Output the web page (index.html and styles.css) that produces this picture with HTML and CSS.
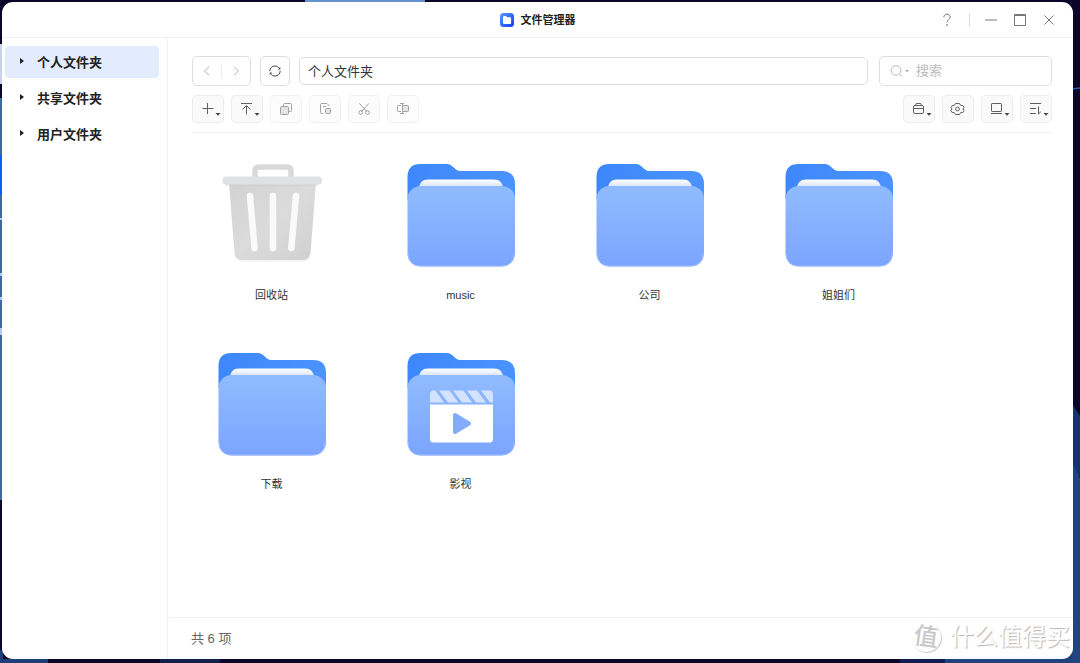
FILE: index.html
```html
<!DOCTYPE html>
<html lang="zh-CN">
<head>
<meta charset="utf-8">
<title>文件管理器</title>
<link rel="stylesheet" href="styles.css">
</head>
<body>
<svg class="wallpaper" viewBox="0 0 1080 663" preserveAspectRatio="none" aria-hidden="true">
  <rect width="1080" height="663" fill="#0b0529"/>
  <path d="M305 0h120v3H305z" fill="#6493cf"/>
  <path d="M0 44h3v40H0z" fill="#c5d3e6"/>
  <path d="M0 98h3v402H0z" fill="#3b69ae"/>
  <path d="M0 155h3v40H0z" fill="#0463f5"/>
  <path d="M0 218h3v2H0zM0 273h3v3H0zM0 297h3v3H0zM0 328h3v7H0z" fill="#b7cbe8"/>
  <path d="M0 650h3v13H0zM3 659h45v4H0z" fill="#1d3f78"/>
  <path d="M160 659h60v4h-60z" fill="#12204c"/>
  <path d="M900 659h45v4h-45z" fill="#101f50"/>
  <path d="M945 650h135v13H945z" fill="#1f427f"/>
  <path d="M1072 404l8 12v60h-8z" fill="#16336d"/>
  <path d="M1072 462l8 16v185h-8z" fill="#21447f"/>
  <path d="M1072 89l8-1" stroke="#2456b8" stroke-width="1.5"/>
</svg>

<svg class="symbols" aria-hidden="true">
  <defs>
    <linearGradient id="front" x1="0" y1="0" x2="0" y2="1"><stop offset="0" stop-color="#91bbff"/><stop offset="1" stop-color="#7ba4ff"/></linearGradient>
    <linearGradient id="back" x1="0" y1="0" x2="1" y2="0"><stop offset="0" stop-color="#3d87fb"/><stop offset="1" stop-color="#4a93ff"/></linearGradient>
    <linearGradient id="paper" x1="0" y1="0" x2="0" y2="1"><stop offset="0" stop-color="#fff"/><stop offset=".4" stop-color="#d5e0f5"/></linearGradient>
    <linearGradient id="bin" x1="0" y1="0" x2="1" y2="1"><stop offset="0" stop-color="#d2d2d2"/><stop offset=".5" stop-color="#dbdbdb"/><stop offset="1" stop-color="#d0d0d0"/></linearGradient>
    <linearGradient id="logo" x1="0" y1="0" x2="1" y2="1"><stop offset="0" stop-color="#5a9bff"/><stop offset="1" stop-color="#0a3cff"/></linearGradient>
  </defs>
  <symbol id="folder" viewBox="0 0 108 104">
    <path d="M.5 36V14Q.5 1 13.500 1H40q3 0 5 2l4 3.500q2 1.500 5 1.500h41q13 0 13 13v15z" fill="url(#back)"/>
    <path d="M12 26q0-9.500 9-9.500h66q9 0 9 9.500v10H12z" fill="url(#paper)"/>
    <rect x=".5" y="23" width="107.500" height="80.500" rx="13" fill="url(#front)"/>
    <path d="M1 90q0 13 13 13h80q13 0 13-13" fill="none" stroke="#a3c1ff" stroke-width=".8"/>
  </symbol>
</svg>

<div class="window">
  <header class="titlebar">
    <h1 class="app-title">
      <svg class="logo" viewBox="0 0 14 14"><rect width="14" height="14" rx="3.500" fill="url(#logo)"/><path d="M3 4.200q0-1.200 1.200-1.200h1.600l1.400 1.300h2.700q1.200 0 1.200 1.200v4.200q0 1.200-1.200 1.200H4.200q-1.200 0-1.200-1.200z" fill="#fff"/></svg>
      文件管理器
    </h1>
    <div class="window-controls">
      <button class="control" aria-label="帮助"><svg viewBox="0 0 14 14"><path d="M3.800 4.300C3.800 2.300 5.200 1.200 7 1.200s3.200 1.100 3.200 2.900c0 2.400-3.200 2.500-3.200 5.200"/><path d="M7 11.200v1.500" stroke-width="1.500"/></svg></button>
      <span class="control-rule"></span>
      <button class="control" aria-label="最小化"><svg viewBox="0 0 14 14"><path d="M1 7h12"/></svg></button>
      <button class="control" aria-label="最大化"><svg viewBox="0 0 14 14"><path d="M1.500 1.500h11v11h-11zM1.500 2.500h11"/></svg></button>
      <button class="control" aria-label="关闭"><svg viewBox="0 0 14 14"><path d="M2.500 2.500l9 9M11.500 2.500l-9 9"/></svg></button>
    </div>
  </header>

  <div class="workspace">
    <nav class="sidebar" aria-label="文件夹">
      <button class="tree-item active" aria-expanded="false"><svg class="caret" viewBox="0 0 4 6"><path d="M0 0l4 3-4 3z"/></svg>个人文件夹</button>
      <button class="tree-item" aria-expanded="false"><svg class="caret" viewBox="0 0 4 6"><path d="M0 0l4 3-4 3z"/></svg>共享文件夹</button>
      <button class="tree-item" aria-expanded="false"><svg class="caret" viewBox="0 0 4 6"><path d="M0 0l4 3-4 3z"/></svg>用户文件夹</button>
    </nav>

    <main class="content">
      <div class="toolbar">
        <div class="nav-row">
          <div class="history">
            <button class="step" aria-label="后退"><svg viewBox="0 0 14 14"><path d="M9 3L4.500 7 9 11"/></svg></button>
            <span class="step-rule"></span>
            <button class="step" aria-label="前进"><svg viewBox="0 0 14 14"><path d="M5 3l4.500 4L5 11"/></svg></button>
          </div>
          <button class="refresh" aria-label="刷新"><svg viewBox="0 0 14 14"><path d="M1.800 7.200C1.800 4 4 2 7 2c1.800 0 3.200.7 4.200 2.200M12.200 6.800C12.200 10 10 12 7 12c-1.800 0-3.200-.7-4.200-2.200"/><path d="M12.300 3v2.600H9.800zM1.700 11V8.400h2.500z" fill="#444" stroke="none"/></svg></button>
          <input class="path" type="text" value="个人文件夹" aria-label="路径">
          <label class="search">
            <svg class="search-icon" viewBox="0 0 20 14"><circle cx="6" cy="6.500" r="4.800"/><path d="M9.500 10l2.700 2.700"/><path d="M15 6h4l-2 2.300z" fill="#aaa" stroke="none"/></svg>
            <input class="search-input" type="search" placeholder="搜索" aria-label="搜索">
          </label>
        </div>
        <div class="tool-row">
          <button class="tool" aria-label="新建"><svg viewBox="0 0 32 28"><path d="M10.500 13.500h11M15.500 8v11"/><path class="drop" d="M23.500 18h5l-2.500 2.800z"/></svg></button>
          <button class="tool" aria-label="上传"><svg viewBox="0 0 32 28"><path d="M10 8.500h11M15.500 19.500v-9M11.500 14.500l4-4 4 4"/><path class="drop" d="M23.500 18h5l-2.500 2.800z"/></svg></button>
          <button class="tool" aria-label="复制" disabled><svg viewBox="0 0 32 28"><rect x="10.500" y="11.500" width="8" height="8" rx="1" fill="#e4e4e4"/><path d="M13.500 11.500v-2q0-1 1-1h6q1 0 1 1v6q0 1-1 1h-2"/></svg></button>
          <button class="tool" aria-label="粘贴" disabled><svg viewBox="0 0 32 28"><path d="M14 18.500h-1.500q-1 0-1-1v-8q0-1 1-1h5.500l2.500 2.500M14 11.500h3"/><rect x="16.500" y="13.500" width="5" height="5" rx="1" fill="#e4e4e4"/></svg></button>
          <button class="tool" aria-label="剪切" disabled><svg viewBox="0 0 32 28"><path d="M11.500 8.500l7.300 8M20.800 8.500l-7.300 8"/><circle cx="12.800" cy="17.500" r="1.900"/><circle cx="19.500" cy="17.500" r="1.900"/></svg></button>
          <button class="tool" aria-label="重命名" disabled><svg viewBox="0 0 32 28"><rect x="15.500" y="10.500" width="6" height="6" rx="1" fill="#e4e4e4"/><path d="M14 16.500h-2.500q-1 0-1-1v-4q0-1 1-1H14M13 8.500h2.500v10H13M17 8.500h-1.500M17 18.500h-1.500"/></svg></button>
          <span class="spacer"></span>
          <button class="tool" aria-label="工具"><svg viewBox="0 0 32 28"><rect x="10.500" y="10.500" width="10" height="8" rx="1.500"/><path d="M12.500 10.500l.7-2h4.600l.7 2M10.500 13.500h10"/><path class="drop" d="M23.500 18h5l-2.500 2.800z"/></svg></button>
          <button class="tool" aria-label="设置"><svg viewBox="0 0 32 28"><circle cx="15.500" cy="14" r="1.900"/><path d="M13.500 8.500h4l1.200 1.900 2.100.1 1.200 2-1 1.500 1 1.500-1.200 2-2.100.1-1.200 1.900h-4l-1.200-1.900-2.100-.1-1.200-2 1-1.500-1-1.500 1.200-2 2.100-.1z" stroke-linejoin="round"/></svg></button>
          <button class="tool" aria-label="视图"><svg viewBox="0 0 32 28"><rect x="10.500" y="8.500" width="10" height="8" rx=".6"/><path d="M10 18.500h11"/><path class="drop" d="M23.500 18h5l-2.500 2.800z"/></svg></button>
          <button class="tool" aria-label="排序"><svg viewBox="0 0 32 28"><path d="M10 8.500h11M10 13.500h6M10 18.500h6M18.500 11.500v7.500l2.300-2.200"/><path class="drop" d="M23.500 18h5l-2.500 2.800z"/></svg></button>
        </div>
      </div>

      <div class="files">
        <button class="file">
          <svg class="file-icon" viewBox="0 0 108 104">
            <path d="M37 15V8q0-4 4-4h28q4 0 4 4v7" fill="none" stroke="#d9d9d9" stroke-width="5.500"/>
            <path d="M11 20h87l-5.500 70q-.6 7-8 7h-60q-7.500 0-8-7z" fill="url(#bin)"/>
            <path d="M17 92q1.500 6 7.500 6h60q6 0 7.500-6" fill="none" stroke="#ededed"/>
            <rect x="7" y="21" width="94" height="2" rx="1" fill="#c9c9c9" opacity=".35"/>
            <rect x="4.500" y="13.500" width="99.500" height="8" rx="3.500" fill="#dfe1e3"/>
            <path d="M32 33l4.500 52M55 33v52M78 33l-4.700 52" stroke="#fafafa" stroke-width="6.500" stroke-linecap="round"/>
          </svg>
          <span class="file-name">回收站</span>
        </button>
        <button class="file"><svg class="file-icon"><use href="#folder"/></svg><span class="file-name">music</span></button>
        <button class="file"><svg class="file-icon"><use href="#folder"/></svg><span class="file-name">公司</span></button>
        <button class="file"><svg class="file-icon"><use href="#folder"/></svg><span class="file-name">姐姐们</span></button>
        <button class="file"><svg class="file-icon"><use href="#folder"/></svg><span class="file-name">下载</span></button>
        <button class="file">
          <svg class="file-icon" viewBox="0 0 108 104">
            <use href="#folder" width="108" height="104"/>
            <path d="M23 50.500V42q0-3.500 3.500-3.500h2L37 50.500zM32 38.500h10.500l9 12H41zM46 38.500h10.200l9 12H55zM60 38.500h10l9 12H69zM74 38.500h8.500q3.500 0 3.500 3.500v8.500h-3z" fill="#d3e2ff"/>
            <path d="M23 52.500h63V87q0 3.500-3.500 3.500h-56Q23 90.500 23 87z" fill="#fff"/>
            <path d="M48 63l14 8.500L48 80z" fill="#82abff" stroke="#82abff" stroke-width="4" stroke-linejoin="round"/>
          </svg>
          <span class="file-name">影视</span>
        </button>
      </div>

      <footer class="status">共 6 项</footer>
    </main>
  </div>
</div>

<div class="watermark"><span class="seal"><span class="seal-char">值</span></span>什么值得买</div>
</body>
</html>
```

FILE: styles.css
```css
* {
  box-sizing: border-box;
}

body {
  margin: 0;
  height: 100vh;
  padding: 2px 7px 4px 2px;
  position: relative;
  overflow: hidden;
  font-family: "Liberation Sans", "Noto Sans CJK SC", sans-serif;
  font-size: 13px;
  color: #333;
}

button,
input {
  font: inherit;
  color: inherit;
  margin: 0;
  padding: 0;
  border: 0;
  background: none;
  outline: none;
}

svg {
  fill: none;
  flex: none;
}

.wallpaper {
  position: absolute;
  inset: 0;
  width: 100%;
  height: 100%;
}

.symbols {
  position: absolute;
  width: 0;
  height: 0;
}

.window {
  position: relative;
  display: flex;
  flex-direction: column;
  height: 100%;
  overflow: hidden;
  border-radius: 11px;
  background: #fff;
}

.titlebar {
  display: grid;
  grid-template-columns: 1fr auto 1fr;
  align-items: center;
  height: 36px;
  border-bottom: 1px solid #f1f1f1;
}

.app-title {
  grid-column: 2;
  display: flex;
  align-items: center;
  gap: 7px;
  margin: 0;
  font-size: 11px;
  line-height: 14px;
  font-weight: 700;
  color: #222;
}

.logo {
  width: 14px;
  height: 14px;
}

.window-controls {
  display: flex;
  justify-content: flex-end;
  align-items: center;
  gap: 1px;
  padding-right: 10px;
}

.control {
  display: grid;
  place-items: center;
  width: 28px;
  height: 28px;
}

.control svg {
  width: 14px;
  height: 14px;
  stroke: #777;
}

.control-rule {
  width: 1px;
  height: 14px;
  margin: 0 6px 0 7px;
  background: #ddd;
}

.workspace {
  flex: 1;
  display: flex;
  min-height: 0;
}

.sidebar {
  display: flex;
  flex-direction: column;
  gap: 4px;
  width: 166px;
  padding: 8px 8px 8px 3px;
  border-right: 1px solid #f1f1f1;
}

.tree-item {
  display: flex;
  align-items: center;
  gap: 13px;
  height: 32px;
  padding: 0 0 2px 15px;
  border-radius: 4px;
  font-weight: 700;
  color: #222;
}

.tree-item.active {
  background: #e3ecfe;
}

.caret {
  width: 4px;
  height: 6px;
  fill: #222;
}

.content {
  flex: 1;
  display: flex;
  flex-direction: column;
  min-width: 0;
}

.toolbar {
  display: flex;
  flex-direction: column;
  gap: 9px;
  margin: 0 21px 0 24px;
  padding: 18px 0 9px;
  border-bottom: 1px solid #f0f0f0;
}

.nav-row {
  display: flex;
  align-items: center;
  height: 30px;
}

.history,
.refresh,
.path,
.search {
  border: 1px solid #dedede;
  border-radius: 5px;
}

.history {
  display: flex;
  align-items: center;
  width: 59px;
  height: 30px;
}

.step {
  flex: 1;
  display: grid;
  place-items: center;
}

.step-rule {
  width: 1px;
  height: 14px;
  background: #ececec;
}

.step svg {
  width: 14px;
  height: 14px;
  stroke: #b5b5b5;
}

.refresh {
  display: grid;
  place-items: center;
  width: 30px;
  height: 30px;
  margin: 0 9px;
}

.refresh svg {
  width: 14px;
  height: 14px;
  stroke: #444;
}

.path {
  flex: 1;
  min-width: 0;
  height: 28px;
  padding: 0 8px 2px;
}

.search {
  display: flex;
  align-items: center;
  gap: 6px;
  width: 173px;
  height: 30px;
  margin-left: 11px;
  padding: 0 10px;
}

.search-icon {
  width: 20px;
  height: 14px;
  stroke: #bbb;
}

.search-input {
  flex: 1;
  min-width: 0;
  padding-bottom: 2px;
}

.search-input::placeholder {
  color: #bbb;
}

.tool-row {
  display: flex;
  gap: 7px;
}

.tool {
  width: 32px;
  height: 28px;
  border-radius: 5px;
  background: #fafafa;
  box-shadow: inset 0 0 0 1px #ececec;
}

.tool svg {
  display: block;
  width: 32px;
  height: 28px;
  stroke: #606060;
}

.tool:disabled svg {
  stroke: #a0a0a0;
}

.tool:disabled {
  background: #fcfcfc;
  box-shadow: inset 0 0 0 1px #f1f1f1;
}

.tool .drop {
  fill: #444;
  stroke: none;
}

.spacer {
  flex: 1;
}

.files {
  flex: 1;
  display: grid;
  grid-template-columns: repeat(auto-fill, 189px);
  align-content: start;
  row-gap: 48px;
  padding: 30px 20px 0 9px;
  min-height: 0;
}

.file {
  display: flex;
  flex-direction: column;
  align-items: center;
  gap: 19px;
}

.file-icon {
  width: 108px;
  height: 104px;
}

.file-name {
  font-size: 11px;
  line-height: 18px;
}

.status {
  display: flex;
  align-items: center;
  height: 42px;
  margin-left: 2px;
  padding: 0 0 2px 21px;
  border-top: 1px solid #f0f0f0;
  color: #666;
}

.watermark {
  position: absolute;
  right: 10px;
  bottom: 9px;
  display: flex;
  align-items: center;
  gap: 9px;
  font-size: 24px;
  line-height: 34px;
  color: #fff;
  text-shadow: 1px 1px 1px #b4b4b4;
}

.seal {
  display: grid;
  place-items: center;
  width: 30px;
  height: 30px;
  border-radius: 50%;
  box-shadow: 1px 1px 1px #ccc;
}

.seal-char {
  font-weight: 500;
  font-size: 24px;
  line-height: 30px;
  color: #c8c8c8;
  text-shadow: none;
  transform: rotate(8deg);
}
```
